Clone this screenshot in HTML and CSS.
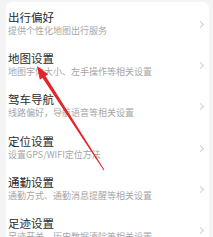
FILE: index.html
```html
<!DOCTYPE html>
<html lang="zh">
<head>
<meta charset="utf-8">
<link rel="stylesheet" href="styles.css">
</head>
<body>
<div class="card">
  <div class="row"><div class="text"><div class="title">出行偏好</div><div class="sub">提供个性化地图出行服务</div></div><span class="chev"></span></div>
  <div class="row"><div class="text"><div class="title">地图设置</div><div class="sub">地图字体大小、左手操作等相关设置</div></div><span class="chev"></span></div>
  <div class="row"><div class="text"><div class="title">驾车导航</div><div class="sub">线路偏好，导航语音等相关设置</div></div><span class="chev"></span></div>
  <div class="row"><div class="text"><div class="title">定位设置</div><div class="sub">设置GPS/WIFI定位方法</div></div><span class="chev"></span></div>
  <div class="row"><div class="text"><div class="title">通勤设置</div><div class="sub">通勤方式、通勤消息提醒等相关设置</div></div><span class="chev"></span></div>
  <div class="row"><div class="text"><div class="title">足迹设置</div><div class="sub">足迹开关、历史数据清除等相关设置</div></div><span class="chev"></span></div>
</div>
<svg class="arrow" width="213" height="237" viewBox="0 0 213 237">
  <polygon points="37,66 48.2,74.3 45.5,76 104.4,169.7 103.6,170.3 42.5,78 39.8,79.7" fill="#e5232a"/>
</svg>
</body>
</html>
```
FILE: styles.css
```css
html, body {
  margin: 0;
  padding: 0;
}
body {
  background: #f4f4f4;
  font-family: "Noto Sans CJK SC", "Noto Sans", sans-serif;
  width: 213px;
  height: 237px;
  overflow: hidden;
  position: relative;
}
.card {
  margin: 2px 4px 0 6px;
  background: #fff;
  border-radius: 6px;
  padding-left: 2px;
}
.row {
  height: 41.4px;
  box-sizing: border-box;
  padding-top: 7.5px;
  display: flex;
  align-items: flex-start;
  justify-content: space-between;
}
.text {
  display: flex;
  flex-direction: column;
}
.title {
  font-size: 11.5px;
  line-height: 15px;
  color: #2a2a2a;
}
.sub {
  font-size: 9px;
  line-height: 12.5px;
  color: #a6a6a6;
}
.chev {
  width: 4px;
  height: 4px;
  border-top: 1px solid #cfcfcf;
  border-right: 1px solid #cfcfcf;
  transform: rotate(45deg);
  margin-top: 12px;
  margin-right: 6px;
}
.arrow {
  position: absolute;
  left: 0;
  top: 0;
}
```
